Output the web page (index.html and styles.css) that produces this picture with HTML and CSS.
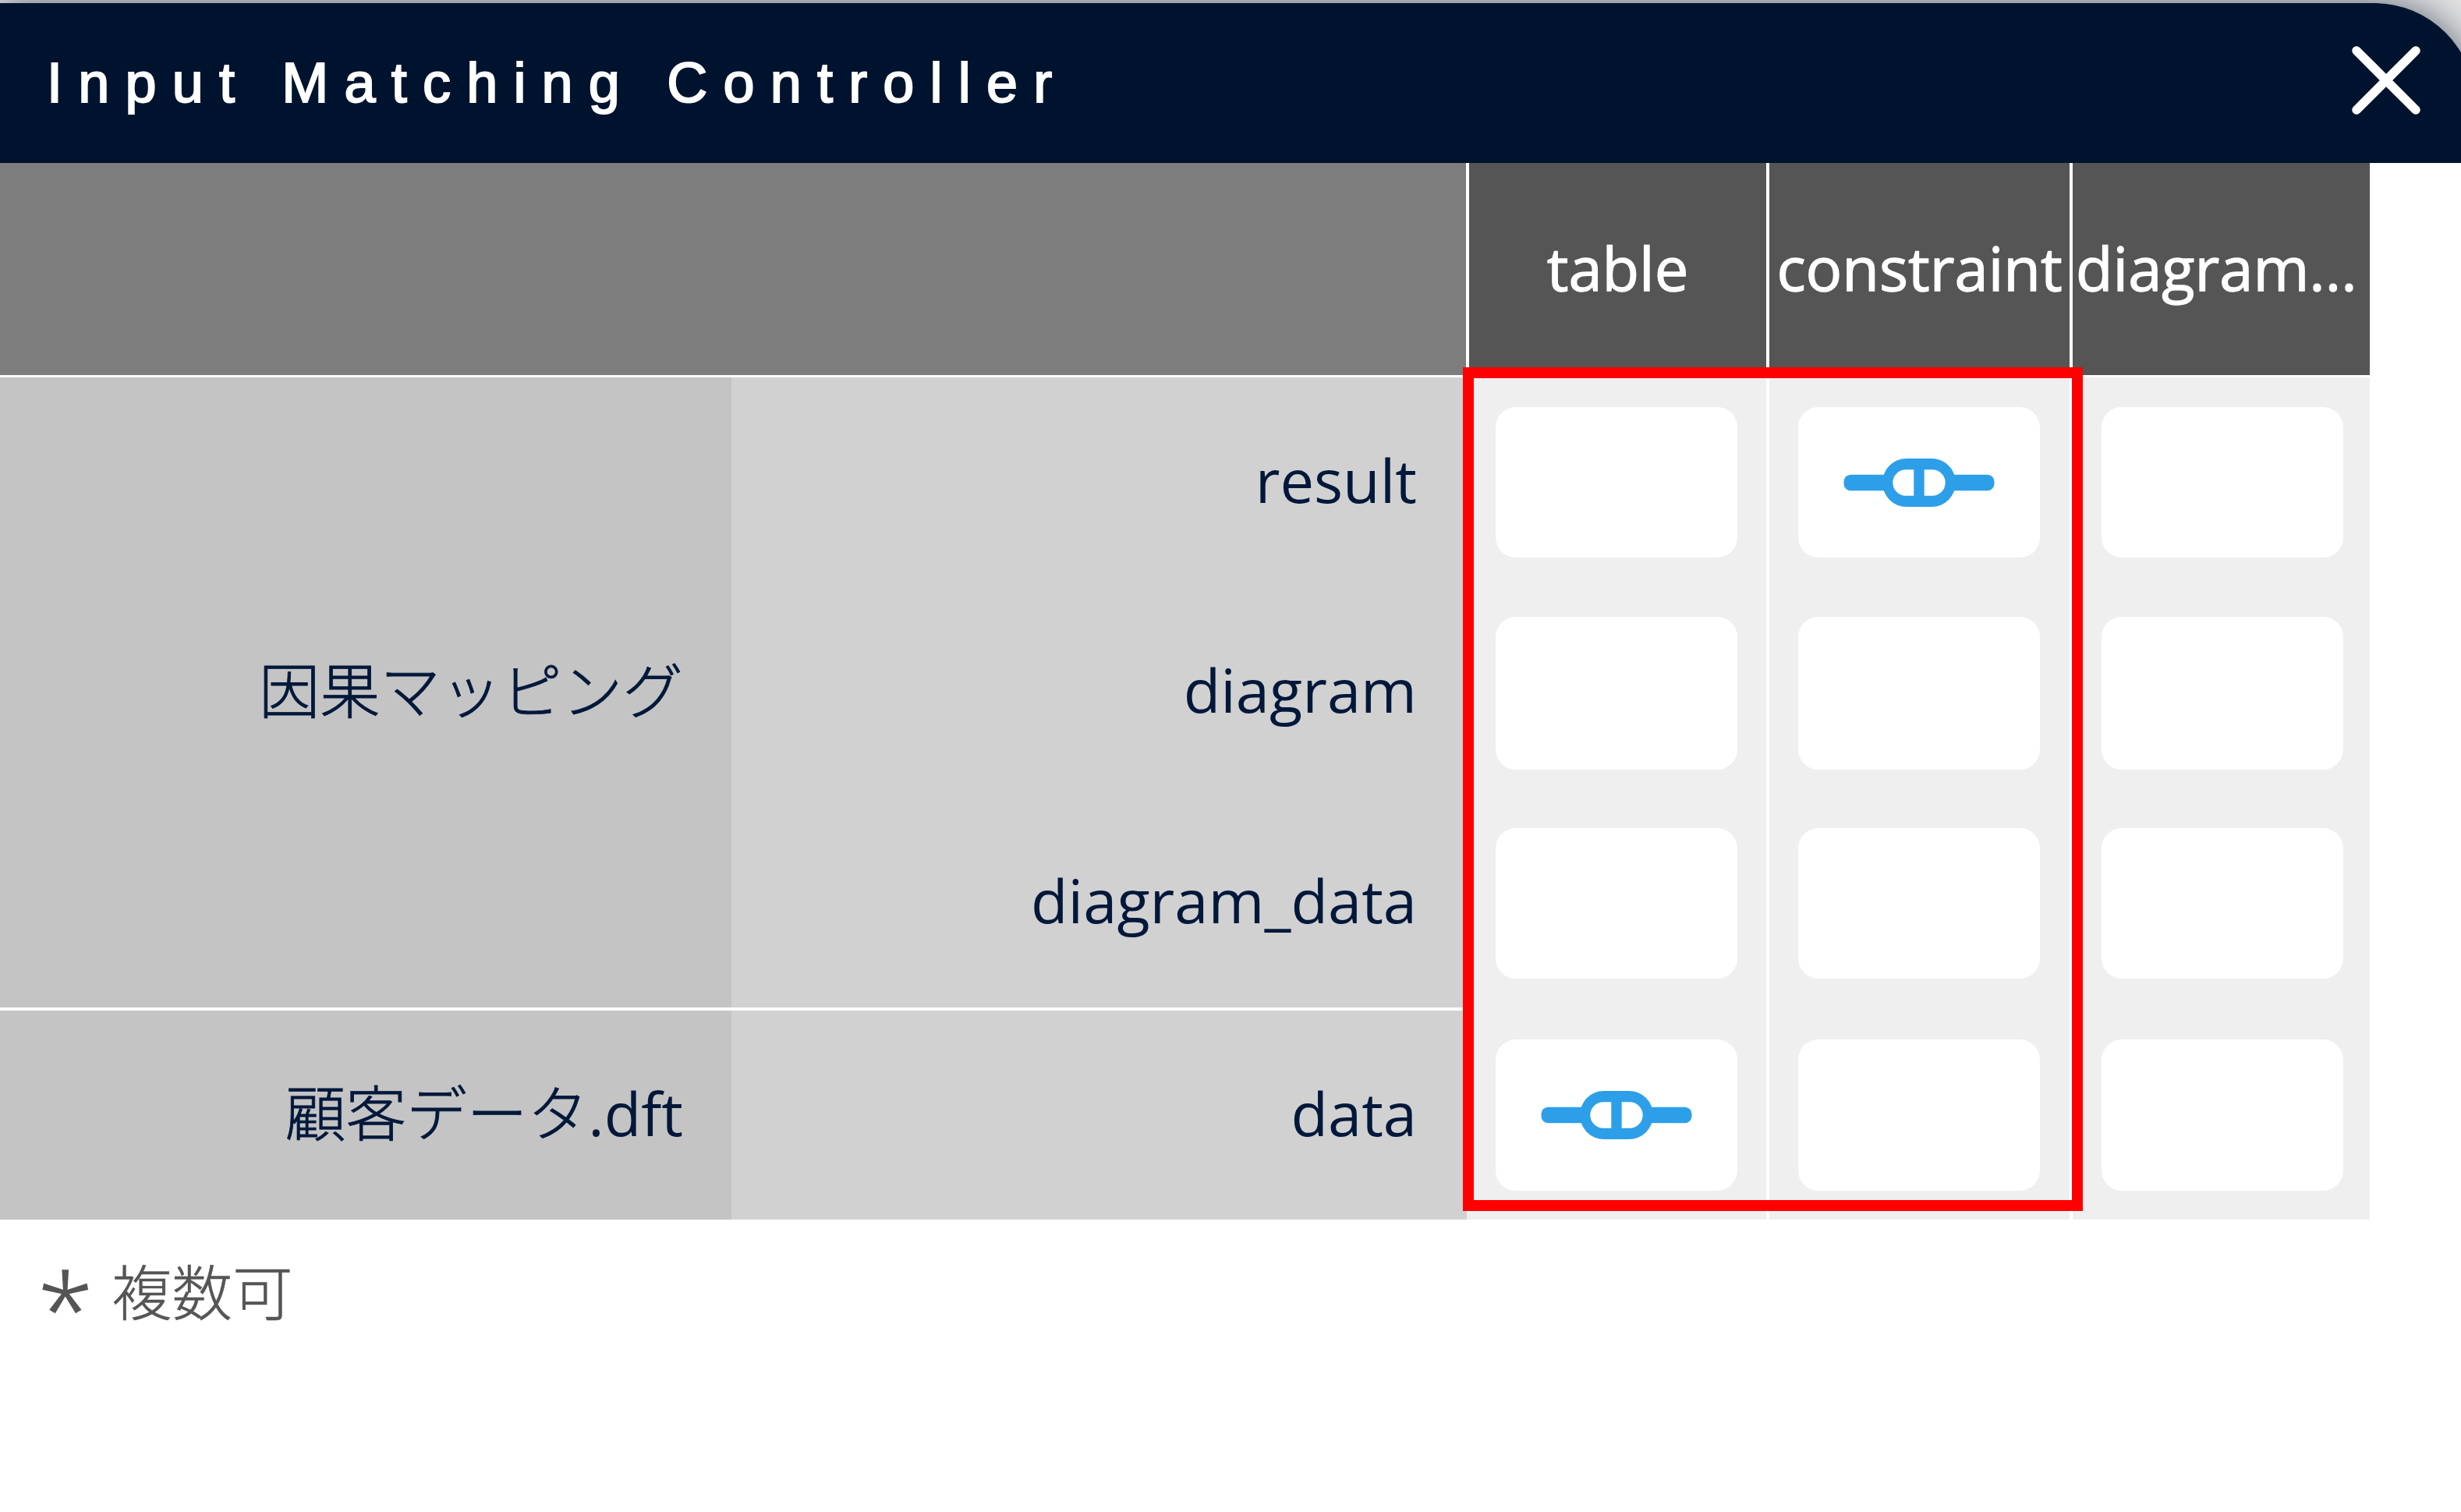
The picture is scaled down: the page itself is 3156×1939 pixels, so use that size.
FILE: index.html
```html
<!DOCTYPE html>
<html lang="ja">
<head>
<meta charset="utf-8">
<title>Input Matching Controller</title>
<link rel="stylesheet" href="styles.css">
</head>
<body>
<svg class="sprite" aria-hidden="true">
  <symbol id="icon-link" viewBox="0 0 194 64">
    <rect x="0.5" y="21.7" width="62" height="20.6" rx="9"/>
    <rect x="131.5" y="21.7" width="62" height="20.6" rx="9"/>
    <path fill-rule="evenodd" d="M81 1H113A31 31 0 0 1 113 63H81A31 31 0 0 1 81 1ZM90.300 15.300H80A16.700 16.700 0 0 0 80 48.700H90.300ZM103.700 15.300V48.700H114A16.700 16.700 0 0 0 114 15.300Z"/>
  </symbol>
</svg>
<main class="dialog">
  <header class="titlebar">
    <h1 class="title">Input Matching Controller</h1>
    <button class="close" aria-label="Close">
      <svg class="close-icon" viewBox="0 0 88 88"><path d="M6 6L82 82M82 6L6 82"/></svg>
    </button>
  </header>

  <section class="matrix">
    <div class="head">
      <div class="head-blank"></div>
      <div class="head-cell">table</div>
      <div class="head-cell">constraint</div>
      <div class="head-cell head-cell-cut">diagram...</div>
    </div>
    <div class="body">
      <div class="groups">
        <div class="group">
          <div class="source">因果マッピング</div>
          <div class="outputs">
            <div class="output">result</div>
            <div class="output">diagram</div>
            <div class="output">diagram_data</div>
          </div>
        </div>
        <div class="group group-last">
          <div class="source">顧客データ<span class="ext">.dft</span></div>
          <div class="outputs">
            <div class="output">data</div>
          </div>
        </div>
      </div>
      <div class="slots">
        <div class="slot"></div>
        <div class="slot slot-tall"></div>
        <div class="slot"></div>
        <div class="slot slot-last"><svg class="link"><use href="#icon-link"/></svg></div>
      </div>
      <div class="slots">
        <div class="slot"><svg class="link"><use href="#icon-link"/></svg></div>
        <div class="slot slot-tall"></div>
        <div class="slot"></div>
        <div class="slot slot-last"></div>
      </div>
      <div class="slots">
        <div class="slot"></div>
        <div class="slot slot-tall"></div>
        <div class="slot"></div>
        <div class="slot slot-last"></div>
      </div>
    </div>
    <div class="highlight"></div>
  </section>

  <p class="note"><span class="star">*</span>複数可</p>
</main>
</body>
</html>
```
FILE: styles.css
```css
* {
  box-sizing: border-box;
}

body {
  margin: 0;
  padding-top: 4px;
  height: 1939px;
  overflow: hidden;
  background: #e4e4e4;
  color: #02183a;
  font-family: "Open Sans", "Noto Sans CJK JP", sans-serif;
  font-size: 77.7px;
  line-height: 106px;
}

.sprite {
  display: none;
}

.dialog {
  width: 3174px;
  height: 1960px;
  background: #fff;
  border-radius: 0 129px 0 0;
  box-shadow: 0 0 50px rgba(0, 19, 47, 0.62);
}

.titlebar {
  display: flex;
  align-items: center;
  justify-content: space-between;
  height: 205px;
  padding: 0 70px 0 60px;
  background: #00132e;
  border-radius: 0 129px 0 0;
}

.title {
  margin: 0 0 2px;
  color: #fff;
  font: 400 72px/84px "Liberation Sans", Arial, sans-serif;
  letter-spacing: 20.2px;
  -webkit-text-stroke: 2px #fff;
}

.close {
  width: 88px;
  height: 88px;
  margin-bottom: 7px;
  padding: 0;
  border: 0;
  background: none;
}

.close-icon {
  display: block;
  width: 88px;
  height: 88px;
  fill: none;
  stroke: #fff;
  stroke-width: 11.5;
  stroke-linecap: round;
}

.matrix {
  position: relative;
  width: 3039px;
}

.head {
  display: grid;
  grid-template-columns: 1880px 381px 385px 381px;
  column-gap: 4px;
  height: 272px;
}

.head-blank {
  background: #7d7d7d;
}

.head-cell {
  display: flex;
  align-items: center;
  justify-content: center;
  padding-bottom: 4px;
  background: #555;
  color: #fff;
  white-space: nowrap;
  -webkit-text-stroke: 1.3px #fff;
}

.head-cell-cut {
  justify-content: flex-start;
  padding-left: 4px;
}

.body {
  display: grid;
  grid-template-columns: 1881px 384px 389px 385px;
  height: 1080px;
  margin-top: 3px;
}

.groups {
  display: flex;
  flex-direction: column;
  gap: 4px;
}

.group {
  display: flex;
  height: 808px;
}

.group-last {
  height: 268px;
}

.source {
  display: flex;
  align-items: center;
  justify-content: flex-end;
  width: 938px;
  padding: 0 62px 7px 0;
  background: #c4c4c4;
  font-weight: 300;
  -webkit-text-stroke: 0.8px #02183a;
}

.ext {
  font-weight: 400;
  -webkit-text-stroke: 0;
}

.outputs {
  display: flex;
  flex-direction: column;
  width: 943px;
  background: #d1d1d1;
}

.output {
  display: flex;
  flex: 1;
  align-items: center;
  justify-content: flex-end;
  padding: 0 64px 7px 0;
}

.slots {
  display: flex;
  flex-direction: column;
  padding: 38px 0 0 37px;
  background: #efefef;
}

.slots + .slots {
  border-left: 4px solid #fff;
}

.slot {
  display: flex;
  align-items: center;
  justify-content: center;
  width: 310px;
  height: 193px;
  margin-bottom: 76px;
  background: #fff;
  border-radius: 26px;
}

.slot-tall {
  height: 196px;
  margin-bottom: 75px;
}

.slot-last {
  height: 194px;
  margin: 2px 0 0;
}

.link {
  width: 194px;
  height: 64px;
  fill: #2d9fe9;
}

.highlight {
  position: absolute;
  left: 1876px;
  top: 262px;
  width: 795px;
  height: 1082px;
  border: 14px solid #f00;
}

.note {
  display: flex;
  gap: 20px;
  margin: 0;
  padding: 40px 0 0 45px;
  color: #555;
  font-size: 77.5px;
  font-weight: 300;
  -webkit-text-stroke: 0.5px #555;
}

.star {
  width: 78px;
  padding-top: 20px;
  font-size: 130px;
  text-align: center;
  -webkit-text-stroke: 1.5px #555;
}
```
